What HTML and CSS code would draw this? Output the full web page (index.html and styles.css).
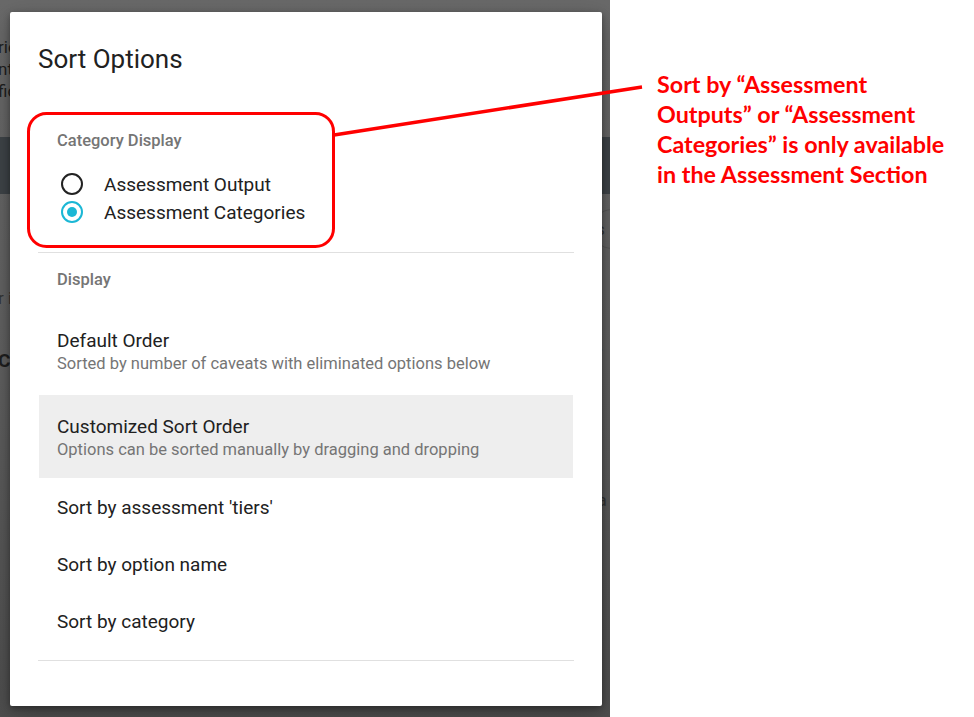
FILE: index.html
```html
<!DOCTYPE html>
<html>
<head>
<meta charset="utf-8">
<link rel="stylesheet" href="styles.css">
</head>
<body>
<div class="stage">
  <div class="screen">
    <div class="bg">
      <div class="bg-left">
        <div class="bg-line l1">ric</div>
        <div class="bg-line">nt</div>
        <div class="bg-line">fic</div>
        <div class="bg-band"></div>
        <div class="bg-line l2">r i</div>
        <div class="bg-line bold l3">C</div>
      </div>
      <div class="bg-right">
        <div class="bg-line l1">u</div>
        <div class="bg-line">lt</div>
        <div class="bg-line bold">k</div>
        <div class="bg-band"></div>
        <div class="bg-pill">s</div>
        <div class="bg-line l2b">t</div>
        <div class="bg-line bold l3">e</div>
        <div class="bg-line l4">v</div>
        <div class="bg-line lr">c</div>
        <div class="bg-line lr">ta</div>
        <div class="bg-line lr">o</div>
        <div class="bg-line lr">n</div>
        <div class="bg-line lr">o</div>
        <div class="bg-line bold lr">o</div>
      </div>
    </div>

    <div class="dialog">
      <h1 class="title">Sort Options</h1>

      <div class="section">
        <div class="subheader">Category Display</div>
        <div class="radio-row">
          <span class="radio"></span>
          <span class="radio-label">Assessment Output</span>
        </div>
        <div class="radio-row">
          <span class="radio checked"></span>
          <span class="radio-label">Assessment Categories</span>
        </div>
      </div>

      <div class="divider first"></div>

      <div class="subheader display">Display</div>

      <div class="list">
        <div class="item two-line default">
          <div class="item-title">Default Order</div>
          <div class="item-sub">Sorted by number of caveats with eliminated options below</div>
        </div>
        <div class="item two-line active">
          <div class="item-title">Customized Sort Order</div>
          <div class="item-sub">Options can be sorted manually by dragging and dropping</div>
        </div>
        <div class="item one-line">
          <div class="item-title">Sort by assessment 'tiers'</div>
        </div>
        <div class="item one-line">
          <div class="item-title">Sort by option name</div>
        </div>
        <div class="item one-line">
          <div class="item-title">Sort by category</div>
        </div>
      </div>

      <div class="divider last"></div>
    </div>
  </div>

  <div class="callout">
    <div>Sort by “Assessment</div>
    <div>Outputs” or “Assessment</div>
    <div>Categories” is only available</div>
    <div>in the Assessment Section</div>
  </div>

  <svg class="annot" width="974" height="717" viewBox="0 0 974 717">
    <rect x="28.5" y="113.5" width="305" height="133" rx="18" ry="18" fill="none" stroke="#ff0000" stroke-width="3"/>
    <line x1="334" y1="135" x2="642" y2="87" stroke="#ff0000" stroke-width="3.5"/>
  </svg>
</div>
</body>
</html>
```

FILE: styles.css
```css
* { box-sizing: border-box; }

html, body {
  margin: 0;
  padding: 0;
  background: #ffffff;
  font-family: Roboto, "Noto Sans", Arial, sans-serif;
}

.stage {
  position: relative;
  width: 974px;
  height: 717px;
  overflow: hidden;
  display: flex;
}

.screen {
  position: relative;
  width: 610px;
  height: 717px;
  overflow: hidden;
  background: linear-gradient(to bottom, #696969 0%, #5f5f5f 50%, #4e4e4e 100%);
}

.bg {
  display: flex;
  justify-content: space-between;
  height: 100%;
  font-size: 17px;
  color: #1e1e1e;
}

.bg-left {
  margin-left: -2px;
  width: 20px;
}

.bg-right {
  width: 20px;
  padding-left: 2px;
}

.bg-line {
  height: 22px;
  line-height: 22px;
  white-space: nowrap;
}

.bg-line.bold { font-weight: 700; }

.bg-left .l1, .bg-right .l1 { margin-top: 36px; }

.bg-band {
  margin-top: 35px;
  height: 57px;
  width: 400px;
  background: #3e4347;
}

.bg-left .bg-band { margin-left: -300px; }

.bg-left .l2 { margin-top: 93px; color: #333; }
.bg-left .l3 { margin-top: 41px; font-size: 19px; }

.bg-pill {
  margin-top: 15px;
  height: 40px;
  width: 40px;
  border: 1px solid #555;
  border-radius: 20px;
  line-height: 38px;
  padding-left: 3px;
  color: #333;
}

.bg-right .l2b { margin-top: 26px; color: #333; }
.bg-right .l3 { margin-top: 41px; font-size: 19px; }
.bg-right .l4 { margin-top: 45px; color: #333; }
.bg-right .lr { margin-top: 20px; color: #333; }

.dialog {
  position: absolute;
  left: 10px;
  top: 12px;
  width: 592px;
  height: 694px;
  background: #ffffff;
  border-radius: 2px;
  box-shadow: 0 2px 6px rgba(0,0,0,0.35), 0 8px 24px rgba(0,0,0,0.25);
  padding: 31px 28px 0 28px;
  color: #212121;
}

.title {
  margin: 0;
  font-size: 26px;
  line-height: 32px;
  font-weight: 400;
  color: #212121;
}

.section {
  padding: 56px 0 0 19px;
}

.subheader {
  font-size: 16.5px;
  line-height: 20px;
  font-weight: 500;
  color: #757575;
}

.section .subheader { margin-bottom: 19px; }

.radio-row {
  display: flex;
  align-items: center;
  height: 28px;
}

.radio {
  width: 22px;
  height: 22px;
  border-radius: 50%;
  border: 2px solid #222222;
  margin-left: 4px;
  margin-right: 21px;
  display: flex;
  align-items: center;
  justify-content: center;
  flex: none;
}

.radio.checked {
  border-color: #1bb7d5;
}

.radio.checked::after {
  content: "";
  width: 10px;
  height: 10px;
  border-radius: 50%;
  background: #1bb7d5;
}

.radio-label {
  font-size: 19px;
  color: #212121;
}

.divider {
  height: 1px;
  background: #e0e0e0;
}

.divider.first { margin-top: 26px; }

.subheader.display {
  margin-top: 17px;
  padding-left: 19px;
}

.list {
  margin-top: 18px;
}

.item {
  padding-left: 18px;
  margin-left: 1px;
  margin-right: 1px;
}

.item.two-line {
  height: 83px;
  padding-top: 20px;
}

.item.default {
  height: 87px;
  padding-top: 21px;
}

.item.active {
  background: #eeeeee;
}

.item.one-line {
  height: 57px;
  padding-top: 2px;
  display: flex;
  align-items: center;
}

.item-title {
  font-size: 19px;
  line-height: 24px;
  color: #212121;
}

.item-sub {
  font-size: 16.5px;
  line-height: 22px;
  color: #757575;
}

.divider.last { margin-top: 11px; }

.callout {
  margin-left: 47px;
  margin-top: 69px;
  font-family: Lato, "Open Sans", sans-serif;
  font-weight: 700;
  font-size: 23.3px;
  line-height: 30px;
  color: #ff0000;
  white-space: nowrap;
}

.annot {
  position: absolute;
  left: 0;
  top: 0;
  pointer-events: none;
}
```
